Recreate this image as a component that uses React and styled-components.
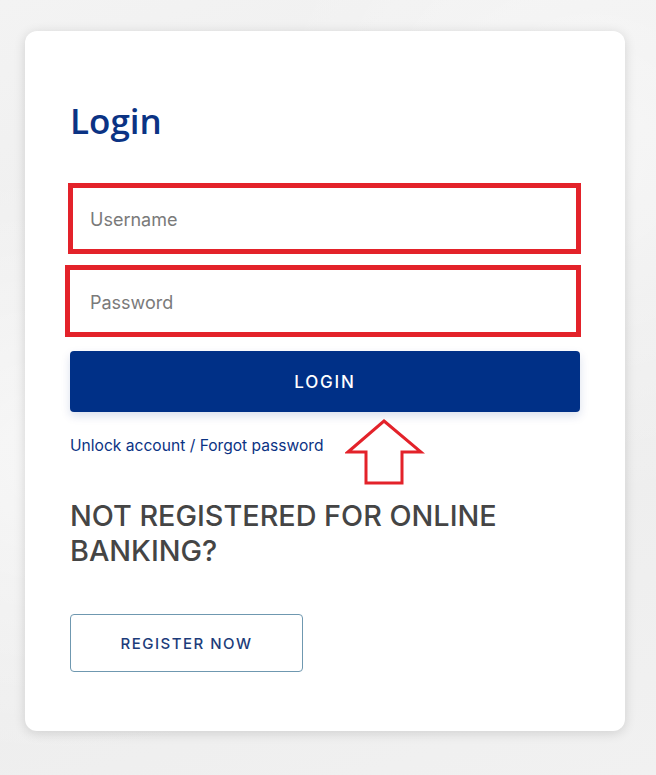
import React from "react";
import styled, { createGlobalStyle } from "styled-components";

const GlobalStyle = createGlobalStyle`
  html, body {
    margin: 0;
    padding: 0;
  }
  body {
    font-family: "Inter", "Roboto", sans-serif;
    background: #efefef;
  }
`;

// 배경 (밝은 회색 대리석 느낌)
const Page = styled.div`
  min-height: 775px;
  box-sizing: border-box;
  padding: 31px 31px 44px 25px;
  background:
    radial-gradient(ellipse at 10% 60%, rgba(255, 255, 255, 0.6), transparent 45%),
    radial-gradient(ellipse at 90% 20%, rgba(255, 255, 255, 0.5), transparent 40%),
    linear-gradient(160deg, #f3f3f3 0%, #ececec 50%, #f1f1f1 100%);
`;

const Card = styled.div`
  position: relative;
  width: 600px;
  height: 700px;
  box-sizing: border-box;
  padding: 0 45px;
  background: #fff;
  border-radius: 12px;
  box-shadow: 0 2px 12px rgba(0, 0, 0, 0.14);
  display: flex;
  flex-direction: column;
`;

const Title = styled.h1`
  margin: 68px 0 0;
  font-family: "Open Sans", sans-serif;
  font-weight: 600;
  font-size: 35px;
  line-height: 44px;
  color: #0b3384;
`;

const Form = styled.form`
  display: flex;
  flex-direction: column;
  margin-top: 40px;
`;

// 입력칸 (빨간 테두리 강조)
const Field = styled.input`
  box-sizing: border-box;
  height: ${(p) => p.$height}px;
  width: ${(p) => p.$width}px;
  margin-left: ${(p) => p.$shift}px;
  margin-bottom: ${(p) => p.$gap}px;
  padding: 2px 0 0 ${(p) => 15 - p.$shift}px;
  border: 5px solid #e3222a;
  outline: none;
  background: #fff;
  font-family: "Inter", sans-serif;
  font-size: 18px;
  color: #333;

  &::placeholder {
    color: #7a7a7a;
  }
`;

const LoginButton = styled.button`
  height: 61px;
  width: 510px;
  border: none;
  border-radius: 4px;
  background: #003087;
  color: #fff;
  font-family: "Inter", sans-serif;
  font-size: 17px;
  font-weight: 500;
  letter-spacing: 1.8px;
  box-shadow: 0 4px 10px rgba(0, 48, 135, 0.15);
  cursor: pointer;
`;

const HelpLink = styled.a`
  margin-top: 24px;
  font-size: 15.6px;
  line-height: 20px;
  color: #0b3384;
  text-decoration: none;
`;

const SubTitle = styled.h2`
  margin: 42px 0 0;
  font-family: "Inter", sans-serif;
  font-weight: 500;
  font-size: 28.8px;
  line-height: 35px;
  color: #454545;
  width: 450px;
`;

const RegisterButton = styled.button`
  margin-top: 46px;
  width: 233px;
  height: 58px;
  background: #fff;
  border: 1px solid #6f98b0;
  border-radius: 4px;
  color: #1c3c7a;
  font-family: "Inter", sans-serif;
  font-size: 15px;
  font-weight: 500;
  letter-spacing: 1.5px;
  cursor: pointer;
`;

// 로그인 버튼을 가리키는 화살표
const Arrow = styled.svg`
  position: absolute;
  left: 320px;
  top: 388px;
`;

const App = () => {
  return (
    <>
      <GlobalStyle />
      <Page>
        <Card>
          <Title>Login</Title>
          <Form onSubmit={(e) => e.preventDefault()}>
            <Field
              placeholder="Username"
              $width={513}
              $height={71}
              $shift={-2}
              $gap={11}
            />
            <Field
              type="password"
              placeholder="Password"
              $width={516}
              $height={72}
              $shift={-5}
              $gap={14}
            />
            <LoginButton type="submit">LOGIN</LoginButton>
          </Form>
          <HelpLink href="#">Unlock account / Forgot password</HelpLink>
          <SubTitle>NOT REGISTERED FOR ONLINE BANKING?</SubTitle>
          <div>
            <RegisterButton>REGISTER NOW</RegisterButton>
          </div>
          <Arrow width="80" height="68" viewBox="0 0 80 68">
            <polygon
              points="39,2 76,33 57,33 57,64 21,64 21,33 3,33"
              fill="none"
              stroke="#e3222a"
              strokeWidth="3"
              strokeLinejoin="miter"
            />
          </Arrow>
        </Card>
      </Page>
    </>
  );
};

export default App;
